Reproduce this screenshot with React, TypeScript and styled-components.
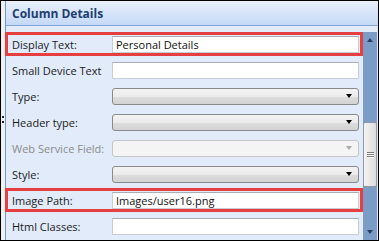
import React from "react";
import styled, { createGlobalStyle } from "styled-components";

const Global = createGlobalStyle`
  html, body { margin: 0; padding: 0; background: #fff; }
  * { box-sizing: border-box; }
`;

const Frame = styled.div`
  width: 379px;
  height: 241px;
  border: 1px solid #000;
  display: flex;
  background: #f0f0f0;
  font-family: "Open Sans", "Noto Sans", sans-serif;
  overflow: hidden;
`;

const Grip = styled.div`
  width: 4px;
  display: flex;
  flex-direction: column;
  align-items: center;
  justify-content: center;
`;

const GripDots = styled.div`
  margin-top: -2px;
  display: flex;
  flex-direction: column;
  gap: 3px;
  span {
    width: 2px;
    height: 2px;
    background: #222;
  }
`;

const Panel = styled.div`
  flex: 1;
  display: flex;
  flex-direction: column;
  border-left: 1px solid #7396c8;
  background: #e1ebf9;
`;

const Header = styled.div`
  height: 25px;
  flex: none;
  background: linear-gradient(#e9f1fc, #c4d9f6);
  border-bottom: 1px solid #7fa5db;
  display: flex;
  align-items: center;
  padding-left: 6px;
  font-weight: 700;
  font-size: 12px;
  color: #1e3d72;
`;

const Body = styled.div`
  flex: 1;
  display: flex;
  padding-top: 6px;
  min-height: 0;
`;

const Form = styled.div`
  flex: 1;
  display: flex;
  flex-direction: column;
  gap: 2px;
  margin-left: -1px;
`;

const Row = styled.div<{ $hl?: boolean }>`
  height: 24px;
  display: flex;
  align-items: center;
  padding: 0 1px 0 4px;
  border: 3px solid ${(p) => (p.$hl ? "#e5403f" : "transparent")};
  position: relative;
  &::before {
    content: "";
    display: ${(p) => (p.$hl ? "none" : "block")};
    position: absolute;
    left: -3px;
    top: -3px;
    bottom: -3px;
    width: 1px;
    background: #7396c8;
  }
`;

const Label = styled.div<{ $disabled?: boolean }>`
  width: 100px;
  flex: none;
  font-size: 11px;
  color: ${(p) => (p.$disabled ? "#8c8c8c" : "#1b1b1b")};
  white-space: nowrap;
`;

const TextBox = styled.div`
  flex: 1;
  height: 17px;
  background: #fff;
  border: 1px solid #c9ced6;
  border-top-color: #a9adb4;
  font-size: 11px;
  color: #111;
  padding-left: 3px;
  line-height: 15px;
  white-space: nowrap;
`;

const Combo = styled.div<{ $disabled?: boolean }>`
  flex: 1;
  height: 17px;
  border: 1px solid ${(p) => (p.$disabled ? "#c2c6ca" : "#8a8a8a")};
  border-radius: 3px;
  background: ${(p) =>
    p.$disabled
      ? "#f4f4f4"
      : "linear-gradient(#f3f3f3 0%, #ebebeb 50%, #dddddd 51%, #d3d3d3 100%)"};
  display: flex;
  align-items: center;
  justify-content: flex-end;
  padding-right: 6px;
`;

const Arrow = styled.span<{ $disabled?: boolean }>`
  width: 0;
  height: 0;
  border-left: 3.5px solid transparent;
  border-right: 3.5px solid transparent;
  border-top: 4px solid ${(p) => (p.$disabled ? "#a9a9a9" : "#000")};
`;

const Scroll = styled.div`
  width: 14px;
  flex: none;
  background: #7c9cc8;
  display: flex;
  flex-direction: column;
  align-items: center;
  margin-right: 1px;
`;

const ScrollArrow = styled.div<{ $down?: boolean }>`
  height: 16px;
  width: 100%;
  display: flex;
  align-items: center;
  justify-content: center;
  span {
    width: 0;
    height: 0;
    border-left: 3.5px solid transparent;
    border-right: 3.5px solid transparent;
    ${(p) =>
      p.$down
        ? "border-top: 4px solid #2a3e5c;"
        : "border-bottom: 4px solid #2a3e5c;"}
  }
`;

const Track = styled.div`
  flex: 1;
  width: 100%;
  display: flex;
  flex-direction: column;
  padding-top: 74px;
`;

const Thumb = styled.div`
  height: 65px;
  width: 14px;
  border: 1px solid #8f98a3;
  border-radius: 2px;
  background: linear-gradient(90deg, #f4f4f4, #dcdcdc);
  display: flex;
  flex-direction: column;
  align-items: center;
  justify-content: center;
  gap: 1px;
  span {
    width: 7px;
    height: 1px;
    background: #7a7a7a;
    box-shadow: 0 1px 0 #fff;
  }
`;

export default function App() {
  return (
    <>
      <Global />
      <Frame>
        <Grip>
          <GripDots>
            <span />
            <span />
          </GripDots>
        </Grip>
        <Panel>
          <Header>Column Details</Header>
          <Body>
            <Form>
              <Row $hl>
                <Label>Display Text:</Label>
                <TextBox>Personal Details</TextBox>
              </Row>
              <Row>
                <Label>Small Device Text</Label>
                <TextBox />
              </Row>
              <Row>
                <Label>Type:</Label>
                <Combo>
                  <Arrow />
                </Combo>
              </Row>
              <Row>
                <Label>Header type:</Label>
                <Combo>
                  <Arrow />
                </Combo>
              </Row>
              <Row>
                <Label $disabled>Web Service Field:</Label>
                <Combo $disabled>
                  <Arrow $disabled />
                </Combo>
              </Row>
              <Row>
                <Label>Style:</Label>
                <Combo>
                  <Arrow />
                </Combo>
              </Row>
              <Row $hl>
                <Label>Image Path:</Label>
                <TextBox>Images/user16.png</TextBox>
              </Row>
              <Row>
                <Label>Html Classes:</Label>
                <TextBox />
              </Row>
            </Form>
            <Scroll>
              <ScrollArrow>
                <span />
              </ScrollArrow>
              <Track>
                <Thumb>
                  <span />
                  <span />
                  <span />
                </Thumb>
              </Track>
              <ScrollArrow $down>
                <span />
              </ScrollArrow>
            </Scroll>
          </Body>
        </Panel>
      </Frame>
    </>
  );
}
